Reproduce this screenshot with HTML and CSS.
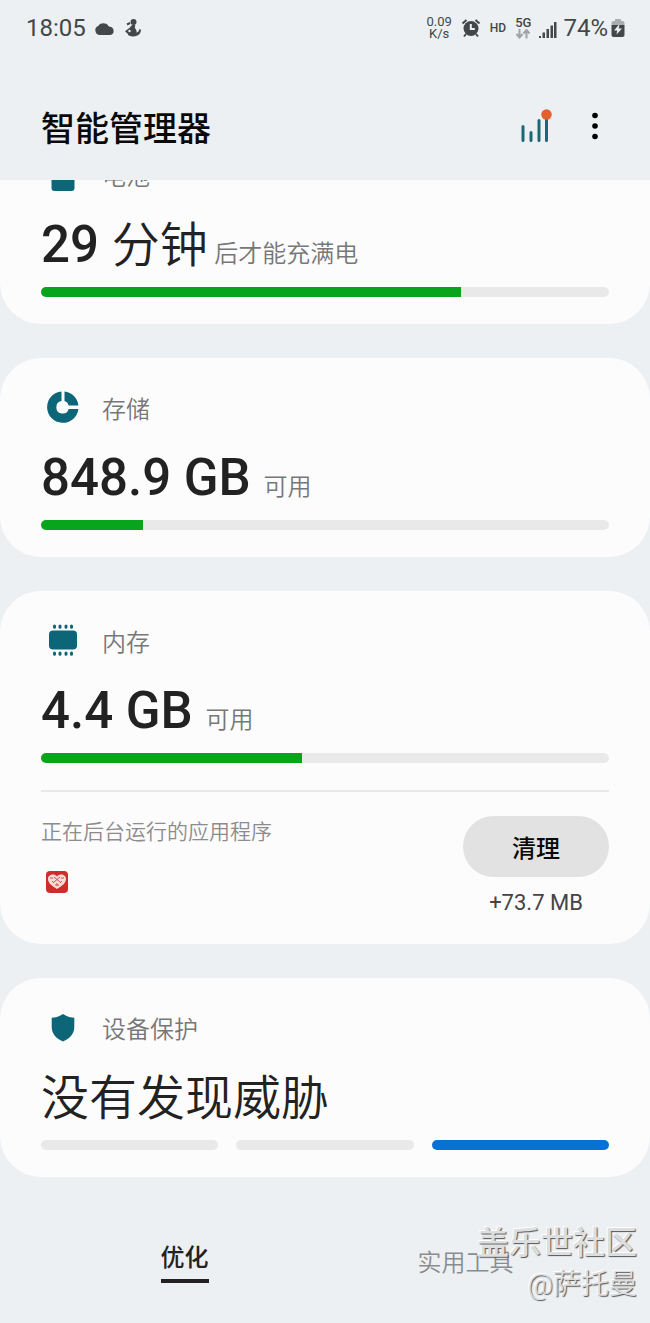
FILE: index.html
```html
<!DOCTYPE html>
<html lang="zh-CN">
<head>
    <meta charset="UTF-8">
    <meta name="viewport" content="width=device-width, initial-scale=1.0">
    <title>智能管理器</title>
    <link rel="stylesheet" href="styles.css">
</head>
<body>
    <div class="status-bar">
        <div class="status-group">
            <span class="clock">18:05</span>
            <svg class="icon-cloud" width="20" height="16" viewBox="0 0 20 16"><path d="M5 15a4.800 4.800 0 0 1-1.500-9.300A5.800 5.800 0 0 1 13.200 5.800l1.300.900a4.200 4.200 0 0 1 .800 8.300z"/></svg>
            <svg width="18" height="20" viewBox="0 0 18 20">
                <circle cx="9.500" cy="4" r="3"/>
                <path d="M8 7h3.200l-.300 3c1.600 1.600 1.900 3.200 1.600 4.600 1.500-.100 2.600-1.600 2.800-3.300l1.700.300c0 3.900-2.800 6.900-7.500 6.900-3.700 0-5.500-1-5.800-2.800L1 13.200l4.600-3.400z"/>
                <path class="stroke" d="M3 6.500l3-1.500"/>
                <circle class="hole" cx="5.500" cy="13" r="1.200"/>
            </svg>
        </div>
        <div class="status-group">
            <span class="speed">0.09<br>K/s</span>
            <svg class="icon-alarm" width="20" height="20" viewBox="0 0 20 20">
                <path class="stroke" d="M1.500 5.500l4-3.500M18.500 5.500l-4-3.500M5 16l-2 2.500M15 16l2 2.500"/>
                <circle cx="10" cy="10.500" r="7.500"/>
                <path class="cut" d="M9.800 6v5h4"/>
            </svg>
            <span class="hd">HD</span>
            <span class="network">
                5G
                <svg width="16" height="10" viewBox="0 0 16 10"><path d="M4.500 0v8M1.500 5l3 3.500 3-3.500M11.500 9.500v-8M8.500 4.500l3-3.500 3 3.500"/></svg>
            </span>
            <svg class="icon-signal" width="18" height="18" viewBox="0 0 18 18"><path d="M0 15h2v2H0zM3.500 11.500h2.500v5.500H3.500zM7.500 8h2.500v9H7.500zM11.500 4.500h2.500v12.500h-2.500zM15 1h2.500v16h-2.500z"/></svg>
            <span class="percent">74%</span>
            <svg width="14" height="20" viewBox="0 0 14 20">
                <path class="faded" d="M4 1h6v2h1.500a2 2 0 0 1 2 2v2H.500V5a2 2 0 0 1 2-2H4z"/>
                <path d="M.500 7h13v10a2 2 0 0 1-2 2h-9a2 2 0 0 1-2-2z"/>
                <path class="hole" d="M8.500 6L3 12.500h3.200L5.500 16.500 11 10.500H7.800z"/>
            </svg>
        </div>
    </div>

    <header class="app-header">
        <h1>智能管理器</h1>
        <button type="button" class="icon-button" aria-label="使用报告">
            <svg width="36" height="36" viewBox="0 0 36 36">
                <path class="chart" d="M5 18.500v14M13 24.500v8M21 12.500v20M28.500 8v24.500"/>
                <circle class="dot" cx="28.500" cy="6.500" r="5.200"/>
            </svg>
        </button>
        <button type="button" class="icon-button more" aria-label="更多选项">
            <svg width="8" height="28" viewBox="0 0 8 28"><circle cx="4" cy="3.500" r="2.800"/><circle cx="4" cy="14" r="2.800"/><circle cx="4" cy="24.500" r="2.800"/></svg>
        </button>
    </header>

    <main class="cards">
        <section class="card">
            <h2 class="card-title">
                <svg width="44" height="44" viewBox="0 0 44 44"><path d="M17 3h10v4h3.500a3 3 0 0 1 3 3v26a3 3 0 0 1-3 3h-17a3 3 0 0 1-3-3V10a3 3 0 0 1 3-3H17z"/></svg>
                电池
            </h2>
            <p class="value">29 <span class="zh">分钟</span> <small class="near">后才能充满电</small></p>
            <div class="bar"><div class="fill" style="width: 74%"></div></div>
        </section>

        <section class="card">
            <h2 class="card-title">
                <svg width="44" height="44" viewBox="0 0 44 44">
                    <path d="M20.500 6.500v9.600a6.300 6.300 0 1 0 7.200 7.900h9.700A15.700 15.700 0 1 1 20.500 6.500z"/>
                    <path d="M23.500 6.500A15.700 15.700 0 0 1 37.400 20.500h-9.700a6.300 6.300 0 0 0-4.200-4.400z"/>
                </svg>
                存储
            </h2>
            <p class="value">848.9 GB <small>可用</small></p>
            <div class="bar"><div class="fill" style="width: 18%"></div></div>
        </section>

        <section class="card">
            <h2 class="card-title">
                <svg width="44" height="44" viewBox="0 0 44 44">
                    <rect x="8" y="12.500" width="28" height="19" rx="4"/>
                    <path class="pins" d="M13.500 8v1.200M19 8v1.200M25 8v1.200M30.500 8v1.200M13.500 35v1.200M19 35v1.200M25 35v1.200M30.500 35v1.200"/>
                </svg>
                内存
            </h2>
            <p class="value">4.4 GB <small>可用</small></p>
            <div class="bar"><div class="fill" style="width: 46%"></div></div>
            <div class="background-apps">
                <div>
                    <p class="apps-label">正在后台运行的应用程序</p>
                    <svg class="app-icon" width="24" height="24" viewBox="0 0 24 24">
                        <rect class="app-bg" x="1" y="1" width="22" height="22" rx="4"/>
                        <path class="heart" d="M12 19C7 16 3 13 3 9c0-4.500 6-6 9-2.500C15 3 21 4.500 21 9c0 4-4 7-9 10z"/>
                        <path class="lace" d="M5 8h3M7 11l2 2M9 7l6 5M15 7l-6 5M16 8h3M15 13l2-2M10 15h4M12 13v3"/>
                    </svg>
                </div>
                <div class="clean">
                    <button type="button" class="clean-button">清理</button>
                    <p class="clean-size">+73.7 MB</p>
                </div>
            </div>
        </section>

        <section class="card">
            <h2 class="card-title">
                <svg width="44" height="44" viewBox="0 0 44 44"><path d="M22 9c3.500 2.500 7 3.500 11.300 3.700V22c0 7-4.500 11.500-11.300 14.500C15.200 33.500 10.700 29 10.700 22v-9.300C15 12.500 18.500 11.500 22 9z"/></svg>
                设备保护
            </h2>
            <p class="value"><span class="zh">没有发现威胁</span></p>
            <div class="segments">
                <div class="segment"></div>
                <div class="segment"></div>
                <div class="segment active"></div>
            </div>
        </section>
    </main>

    <nav class="tabs">
        <a href="#optimize" class="tab selected">优化</a>
        <a href="#tools" class="tab">实用工具</a>
    </nav>

    <div class="watermark">
        <p class="community">盖乐世社区</p>
        <p class="author">@萨托曼</p>
    </div>
</body>
</html>
```
FILE: styles.css
```css
* {
    box-sizing: border-box;
}
body {
    position: relative;
    display: flex;
    flex-direction: column;
    min-height: 100vh;
    margin: 0;
    background: #ecf0f3;
    color: #222;
    font-family: Roboto, "Noto Sans CJK SC", sans-serif;
}
h1, h2, p {
    margin: 0;
}
button {
    border: none;
    padding: 0;
    font-family: inherit;
    cursor: pointer;
}
svg {
    display: block;
    flex: none;
}

/* status bar */
.status-bar {
    display: flex;
    justify-content: space-between;
    align-items: center;
    height: 56px;
    padding: 0 25px 0 26px;
    color: #434749;
    fill: #434749;
}
.status-group {
    display: flex;
    align-items: center;
}
.status-group .stroke {
    fill: none;
    stroke: #434749;
    stroke-width: 2;
}
.status-group .hole {
    fill: #ecf0f3;
}
.status-group .faded {
    fill: #a9adaf;
}
.clock, .percent {
    font-size: 24px;
}
.clock {
    margin-right: 9px;
}
.icon-cloud {
    margin-right: 9px;
}
.speed {
    font-size: 13px;
    line-height: 12px;
    text-align: center;
}
.icon-alarm {
    margin: 0 9px;
}
.icon-alarm .cut {
    fill: none;
    stroke: #ecf0f3;
    stroke-width: 2;
}
.hd {
    font-size: 12px;
    font-weight: 500;
}
.network {
    display: flex;
    flex-direction: column;
    align-items: center;
    margin: 0 8px 0 9px;
    font-size: 13px;
    font-weight: 500;
    line-height: 12px;
}
.network svg {
    fill: none;
    stroke: #a0a4a6;
    stroke-width: 2;
}
.icon-signal {
    margin: 4px 6px 0 0;
}
.percent {
    margin-right: 3px;
}

/* header */
.app-header {
    display: flex;
    align-items: center;
    height: 124px;
    padding: 0 51px 0 41px;
}
.app-header h1 {
    flex: 1;
    padding-top: 22px;
    color: #0a0a0a;
    font-size: 34px;
    font-weight: 500;
    line-height: 40px;
}
.icon-button {
    background: none;
    margin-top: 16px;
}
.more {
    margin-left: 37px;
}
.chart {
    fill: none;
    stroke: #1b6878;
    stroke-width: 3;
    stroke-linecap: round;
}
.dot {
    fill: #e4602a;
}

/* cards */
.cards {
    display: flex;
    flex-direction: column;
    gap: 34px;
    overflow: hidden;
}
.card {
    padding: 25px 41px 27px;
    background: #fcfcfc;
    border-radius: 41px;
}
/* first card is scrolled partly under the header */
.card:first-child {
    margin-top: -55px;
}
.card-title {
    display: flex;
    align-items: center;
    gap: 17px;
    height: 48px;
    color: #777;
    fill: #0d6678;
    font-size: 24px;
    font-weight: 350;
}
.pins {
    stroke: #0d6678;
    stroke-width: 3;
    stroke-linecap: round;
}
.value {
    margin: 17px 0 12px;
    font-size: 51px;
    font-weight: 500;
    line-height: 60px;
}
.value .zh {
    font-size: 48px;
    font-weight: 350;
    line-height: 48px;
}
.value small {
    color: #777;
    font-size: 24px;
    font-weight: 350;
    line-height: 24px;
}
.value .near {
    margin-left: -6px;
}
.bar {
    height: 10px;
    background: #e9e9e9;
    border-radius: 5px;
    overflow: hidden;
}
.fill {
    height: 100%;
    background: #08a41b;
}
.segments {
    display: grid;
    grid-template-columns: repeat(3, 1fr);
    gap: 18px;
}
.segment {
    height: 10px;
    background: #e9e9e9;
    border-radius: 5px;
}
.segment.active {
    background: #0572d4;
}

/* memory details */
.background-apps {
    display: flex;
    justify-content: space-between;
    margin-top: 27px;
    padding-top: 24px;
    border-top: 2px solid #e9e9e9;
}
.apps-label {
    color: #8c8c8c;
    font-size: 21px;
    font-weight: 350;
    line-height: 32px;
}
.app-icon {
    margin: 22px 0 0 4px;
}
.app-bg {
    fill: #cf2c2b;
}
.heart {
    fill: #f8dcd8;
}
.lace {
    fill: none;
    stroke: #d4504c;
    stroke-width: 1;
}
.clean {
    text-align: center;
}
.clean-button {
    width: 146px;
    height: 61px;
    background: #e2e2e2;
    border-radius: 31px;
    color: #0a0a0a;
    font-size: 24px;
    font-weight: 500;
}
.clean-size {
    margin-top: 12px;
    color: #444;
    font-size: 22px;
    line-height: 28px;
}

/* bottom tabs */
.tabs {
    display: grid;
    grid-template-columns: 1fr 1fr;
    align-items: center;
    justify-items: center;
    padding: 66px 44px 40px;
}
.tab {
    color: #8a8d8f;
    font-size: 24px;
    font-weight: 350;
    line-height: 30px;
    text-decoration: none;
}
.tab.selected {
    padding-bottom: 6px;
    border-bottom: 4px solid #222;
    color: #222;
    font-weight: 500;
}

.watermark {
    position: absolute;
    right: 13px;
    bottom: 18px;
    color: #dcdedf;
    text-align: right;
    text-shadow: 1px 1px 1px #555, -1px -1px 0 #fff;
    pointer-events: none;
}
.community {
    font-size: 32px;
    font-weight: 500;
    line-height: 44px;
}
.author {
    font-size: 28px;
    font-weight: 350;
    line-height: 40px;
}
```
